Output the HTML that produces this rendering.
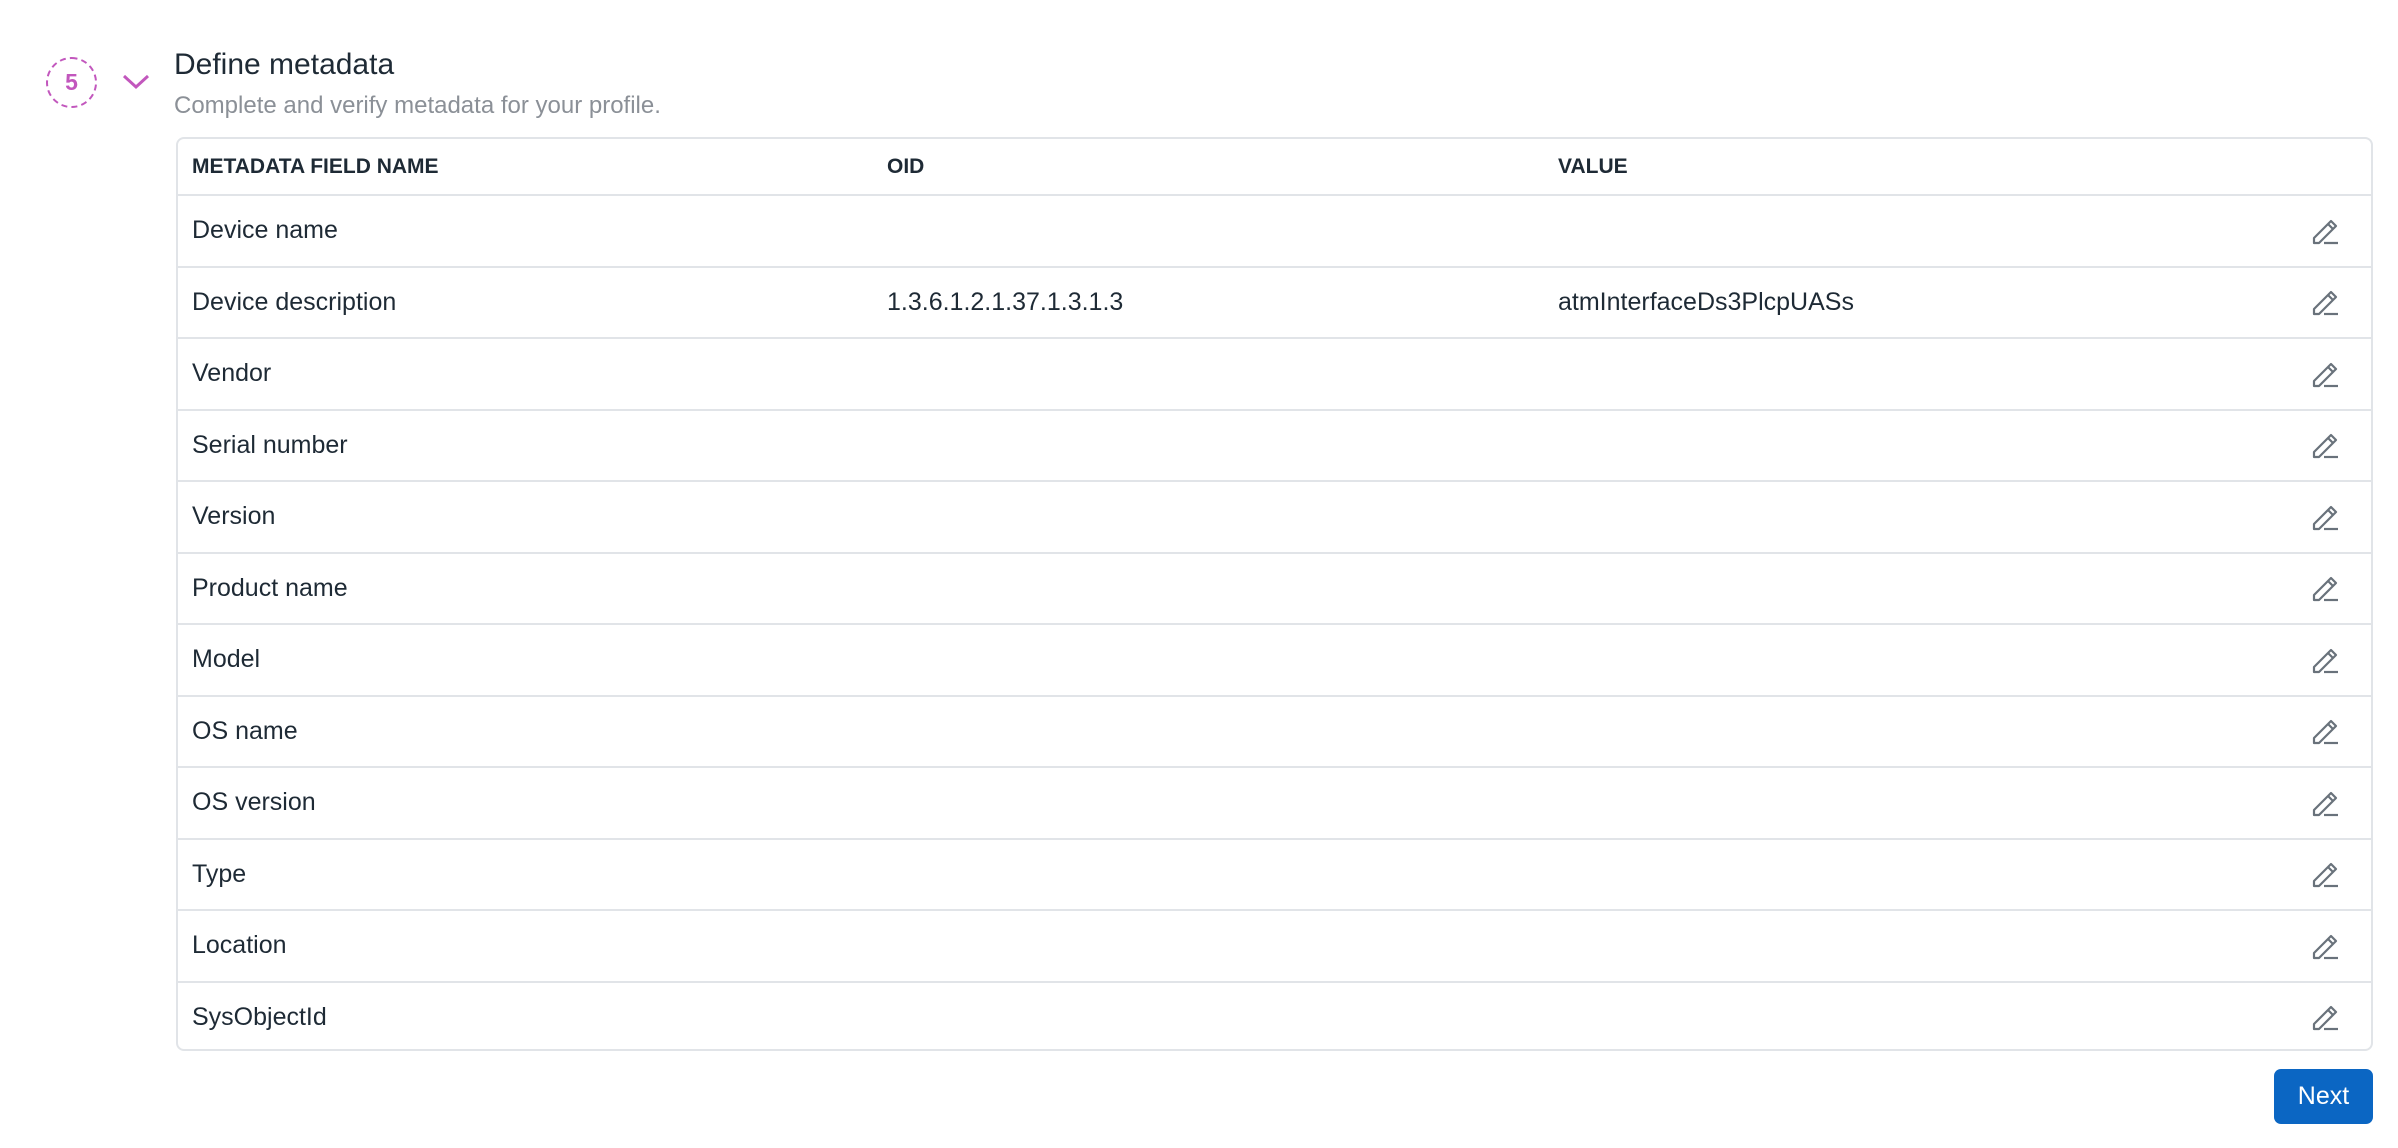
<!DOCTYPE html>
<html><head><meta charset="utf-8"><style>
*{margin:0;padding:0;box-sizing:border-box}
body{width:2398px;height:1148px;background:#fff;font-family:"Liberation Sans",sans-serif;color:#1e2a35;position:relative;overflow:hidden}
.circle{position:absolute;left:46px;top:57px;width:51px;height:51px;border:2px dashed #c257bd;border-radius:50%;color:#c257bd;font-weight:bold;font-size:23px;display:flex;align-items:center;justify-content:center}
.chev{position:absolute;left:121px;top:72px}
.title{position:absolute;left:174px;top:48px;font-size:30px}
.sub{position:absolute;left:174px;top:92px;font-size:24px;color:#8b9097}
.tbl{position:absolute;left:176px;top:137px;width:2197px;height:914px;border:2px solid #e1e4e8;border-radius:8px;overflow:hidden}
.row{height:71.5px;border-top:2px solid #e1e4e8;position:relative;font-size:25px;display:flex;align-items:center}
.hdr{height:55px;border-top:none;font-size:21px;font-weight:bold}
.c1{position:absolute;left:14px}.c2{position:absolute;left:709px}.c3{position:absolute;left:1380px}
.ed{position:absolute;right:30px;top:50%;margin-top:-15px}
.btn{position:absolute;left:2274px;top:1069px;width:99px;height:55px;background:#0b66c3;border-radius:7px;color:#fff;font-size:25px;display:flex;align-items:center;justify-content:center}
</style></head><body>
<div class="circle">5</div>
<svg class="chev" width="30" height="20" viewBox="0 0 30 20"><path d="M3 4 L15 15 L27 4" fill="none" stroke="#c257bd" stroke-width="3"/></svg>
<div class="title">Define metadata</div>
<div class="sub">Complete and verify metadata for your profile.</div>
<div class="tbl">
<div class="row hdr"><span class="c1">METADATA FIELD NAME</span><span class="c2">OID</span><span class="c3">VALUE</span></div>
<div class="row"><span class="c1">Device name</span><svg class="ed" width="30" height="30" viewBox="0 0 30 30"><path d="M3 27 L3 22 L20 5 L25 10 L8 27 Z M17 8 L22 13" fill="none" stroke="#69727b" stroke-width="2.2" stroke-linejoin="round"/><path d="M13 27 H27" stroke="#69727b" stroke-width="2.2"/></svg></div>
<div class="row"><span class="c1">Device description</span><span class="c2">1.3.6.1.2.1.37.1.3.1.3</span><span class="c3">atmInterfaceDs3PlcpUASs</span><svg class="ed" width="30" height="30" viewBox="0 0 30 30"><path d="M3 27 L3 22 L20 5 L25 10 L8 27 Z M17 8 L22 13" fill="none" stroke="#69727b" stroke-width="2.2" stroke-linejoin="round"/><path d="M13 27 H27" stroke="#69727b" stroke-width="2.2"/></svg></div>
<div class="row"><span class="c1">Vendor</span><svg class="ed" width="30" height="30" viewBox="0 0 30 30"><path d="M3 27 L3 22 L20 5 L25 10 L8 27 Z M17 8 L22 13" fill="none" stroke="#69727b" stroke-width="2.2" stroke-linejoin="round"/><path d="M13 27 H27" stroke="#69727b" stroke-width="2.2"/></svg></div>
<div class="row"><span class="c1">Serial number</span><svg class="ed" width="30" height="30" viewBox="0 0 30 30"><path d="M3 27 L3 22 L20 5 L25 10 L8 27 Z M17 8 L22 13" fill="none" stroke="#69727b" stroke-width="2.2" stroke-linejoin="round"/><path d="M13 27 H27" stroke="#69727b" stroke-width="2.2"/></svg></div>
<div class="row"><span class="c1">Version</span><svg class="ed" width="30" height="30" viewBox="0 0 30 30"><path d="M3 27 L3 22 L20 5 L25 10 L8 27 Z M17 8 L22 13" fill="none" stroke="#69727b" stroke-width="2.2" stroke-linejoin="round"/><path d="M13 27 H27" stroke="#69727b" stroke-width="2.2"/></svg></div>
<div class="row"><span class="c1">Product name</span><svg class="ed" width="30" height="30" viewBox="0 0 30 30"><path d="M3 27 L3 22 L20 5 L25 10 L8 27 Z M17 8 L22 13" fill="none" stroke="#69727b" stroke-width="2.2" stroke-linejoin="round"/><path d="M13 27 H27" stroke="#69727b" stroke-width="2.2"/></svg></div>
<div class="row"><span class="c1">Model</span><svg class="ed" width="30" height="30" viewBox="0 0 30 30"><path d="M3 27 L3 22 L20 5 L25 10 L8 27 Z M17 8 L22 13" fill="none" stroke="#69727b" stroke-width="2.2" stroke-linejoin="round"/><path d="M13 27 H27" stroke="#69727b" stroke-width="2.2"/></svg></div>
<div class="row"><span class="c1">OS name</span><svg class="ed" width="30" height="30" viewBox="0 0 30 30"><path d="M3 27 L3 22 L20 5 L25 10 L8 27 Z M17 8 L22 13" fill="none" stroke="#69727b" stroke-width="2.2" stroke-linejoin="round"/><path d="M13 27 H27" stroke="#69727b" stroke-width="2.2"/></svg></div>
<div class="row"><span class="c1">OS version</span><svg class="ed" width="30" height="30" viewBox="0 0 30 30"><path d="M3 27 L3 22 L20 5 L25 10 L8 27 Z M17 8 L22 13" fill="none" stroke="#69727b" stroke-width="2.2" stroke-linejoin="round"/><path d="M13 27 H27" stroke="#69727b" stroke-width="2.2"/></svg></div>
<div class="row"><span class="c1">Type</span><svg class="ed" width="30" height="30" viewBox="0 0 30 30"><path d="M3 27 L3 22 L20 5 L25 10 L8 27 Z M17 8 L22 13" fill="none" stroke="#69727b" stroke-width="2.2" stroke-linejoin="round"/><path d="M13 27 H27" stroke="#69727b" stroke-width="2.2"/></svg></div>
<div class="row"><span class="c1">Location</span><svg class="ed" width="30" height="30" viewBox="0 0 30 30"><path d="M3 27 L3 22 L20 5 L25 10 L8 27 Z M17 8 L22 13" fill="none" stroke="#69727b" stroke-width="2.2" stroke-linejoin="round"/><path d="M13 27 H27" stroke="#69727b" stroke-width="2.2"/></svg></div>
<div class="row"><span class="c1">SysObjectId</span><svg class="ed" width="30" height="30" viewBox="0 0 30 30"><path d="M3 27 L3 22 L20 5 L25 10 L8 27 Z M17 8 L22 13" fill="none" stroke="#69727b" stroke-width="2.2" stroke-linejoin="round"/><path d="M13 27 H27" stroke="#69727b" stroke-width="2.2"/></svg></div>
</div>
<div class="btn">Next</div>
</body></html>
